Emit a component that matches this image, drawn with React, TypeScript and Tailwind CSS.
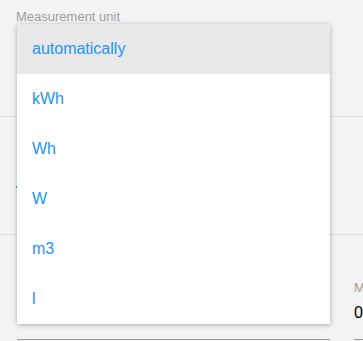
import React from "react";

const units = ["automatically", "kWh", "Wh", "W", "m3", "l"];

export default function App() {
  return (
    <div
      className="relative w-[363px] h-[341px] overflow-hidden bg-[#f3f3f3]"
      style={{ fontFamily: '"Liberation Sans", Arial, sans-serif' }}
    >
      {/* page behind the open menu */}
      <div className="flex flex-col">
        <div className="h-[117px] border-b border-[#dedede] pl-4 pt-[9px]">
          <p className="text-[13px] leading-[15px] text-[#9e9e9e]">Measurement unit</p>
        </div>
        <div className="relative h-[118px] border-b border-[#dedede]">
          <span className="absolute left-4 top-[69px] w-px h-[2px] bg-[#2196f3]" />
        </div>
        <div className="flex gap-6 pl-[17px] pt-[45px]">
          <div className="w-[313px] shrink-0 h-[60px] border-b border-[#9a9a9a]" />
          <div className="w-[200px] shrink-0 h-[60px] border-b border-[#9a9a9a] whitespace-nowrap">
            <p className="text-[13px] leading-[15px] text-[#9e9e9e]">Meter reading</p>
            <p className="mt-[9px] text-[16px] leading-[18px] text-black">0</p>
          </div>
        </div>
      </div>

      {/* dropdown menu */}
      <ul className="absolute left-[17px] top-[24px] w-[313px] bg-white shadow-[0_1px_5px_rgba(0,0,0,0.3)]">
        {units.map((u, i) => (
          <li
            key={u}
            className={`h-[50px] flex items-center pl-[15px] text-[16px] text-[#2196f3] ${
              i === 0 ? "bg-[#e8e8e8]" : "bg-white"
            }`}
          >
            {u}
          </li>
        ))}
      </ul>
    </div>
  );
}
